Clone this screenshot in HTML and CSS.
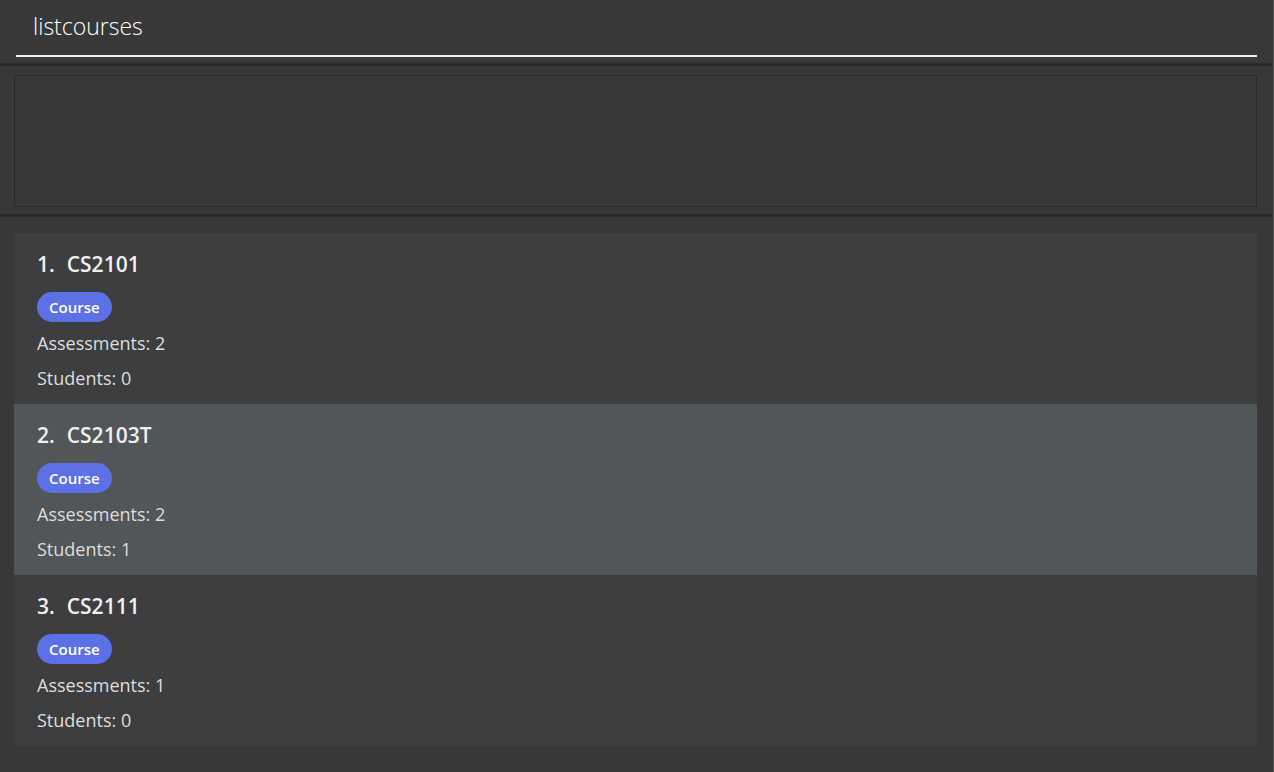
FILE: index.html
```html
<!DOCTYPE html>
<html>
<head>
<meta charset="utf-8">
<link rel="stylesheet" href="styles.css">
</head>
<body>
<div class="app">
  <section class="command">
    <div class="command-field">listcourses</div>
  </section>
  <div class="divider"></div>
  <section class="result">
    <div class="result-box"></div>
  </section>
  <div class="divider"></div>
  <section class="list">
    <div class="card">
      <div class="title"><span class="idx">1.</span>CS2101</div>
      <span class="badge">Course</span>
      <div class="stat">Assessments: 2</div>
      <div class="stat">Students: 0</div>
    </div>
    <div class="card selected">
      <div class="title"><span class="idx">2.</span>CS2103T</div>
      <span class="badge">Course</span>
      <div class="stat">Assessments: 2</div>
      <div class="stat">Students: 1</div>
    </div>
    <div class="card">
      <div class="title"><span class="idx">3.</span>CS2111</div>
      <span class="badge">Course</span>
      <div class="stat">Assessments: 1</div>
      <div class="stat">Students: 0</div>
    </div>
  </section>
</div>
</body>
</html>
```

FILE: styles.css
```css
html, body {
  margin: 0;
  padding: 0;
  background: #383838;
  height: 100%;
}
body {
  font-family: "Open Sans", "Noto Sans", sans-serif;
  color: #e6e6e6;
}
.app {
  width: 1273px;
  height: 772px;
  border-right: 1px solid #585858;
  display: flex;
  flex-direction: column;
}
.command {
  height: 63px;
  padding: 0 16px 0 16px;
  box-sizing: border-box;
}
.command-field {
  height: 57px;
  box-sizing: border-box;
  border-bottom: 2px solid #f0f0f0;
  padding: 11px 0 0 17px;
  font-size: 23px;
  font-weight: 300;
  color: #ffffff;
  line-height: 30px;
}
.divider {
  height: 3px;
  background: #2c2c2c;
}
.result {
  padding: 9px 16px 7px 14px;
}
.result-box {
  height: 132px;
  border: 1px solid #2a2a2a;
  box-sizing: border-box;
  width: 1243px;
}
.list {
  padding: 16px 16px 0 14px;
}
.card {
  width: 1243px;
  height: 171px;
  box-sizing: border-box;
  background: #3c3e3f;
  padding: 16px 23px 0 23px;
  display: flex;
  flex-direction: column;
  align-items: flex-start;
}
.card.selected {
  background: #515658;
}
.title {
  font-size: 21px;
  line-height: 30px;
  font-weight: 600;
  color: #f0f0f0;
}
.idx {
  margin-right: 12px;
}
.badge {
  margin-top: 13px;
  height: 30px;
  line-height: 30px;
  padding: 0 12px;
  border-radius: 15px;
  background: #5c71e6;
  color: #ffffff;
  font-size: 15px;
  font-weight: 600;
}
.stat {
  font-size: 18px;
  line-height: 35px;
  color: #dedede;
}
.badge + .stat {
  margin-top: 4px;
}
```
